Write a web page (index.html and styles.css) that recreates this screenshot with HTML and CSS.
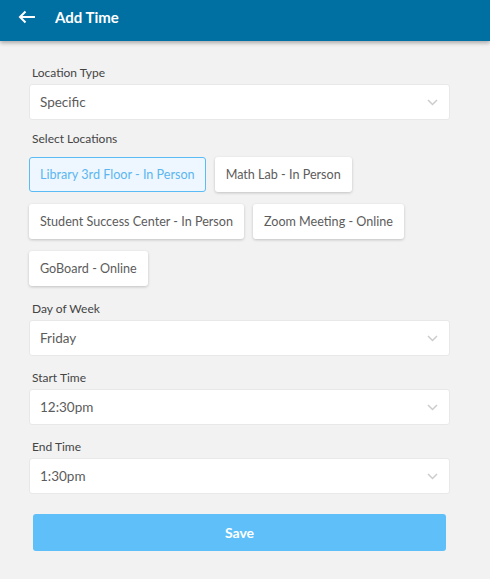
FILE: index.html
```html
<!DOCTYPE html>
<html>
<head>
<meta charset="utf-8">
<link rel="stylesheet" href="styles.css">
</head>
<body>
<header class="topbar">
  <svg class="back" width="18" height="14" viewBox="0 0 18 14"><path d="M17 7H2M7.5 1.5L2 7l5.5 5.5" fill="none" stroke="#fff" stroke-width="2"/></svg>
  <h1 class="title">Add Time</h1>
</header>
<main class="form">
  <div class="field first">
    <label class="label">Location Type</label>
    <div class="select"><span>Specific</span><svg class="chev" width="11" height="7" viewBox="0 0 11 7"><path d="M1 1l4.5 4.5L10 1" fill="none" stroke="#ccc" stroke-width="1.5"/></svg></div>
  </div>
  <div class="field locations">
    <label class="label">Select Locations</label>
    <div class="chips">
      <span class="chip active">Library 3rd Floor - In Person</span>
      <span class="chip">Math Lab - In Person</span>
      <span class="chip">Student Success Center - In Person</span>
      <span class="chip">Zoom Meeting - Online</span>
      <span class="chip">GoBoard - Online</span>
    </div>
  </div>
  <div class="field">
    <label class="label">Day of Week</label>
    <div class="select"><span>Friday</span><svg class="chev" width="11" height="7" viewBox="0 0 11 7"><path d="M1 1l4.5 4.5L10 1" fill="none" stroke="#ccc" stroke-width="1.5"/></svg></div>
  </div>
  <div class="field">
    <label class="label">Start Time</label>
    <div class="select"><span>12:30pm</span><svg class="chev" width="11" height="7" viewBox="0 0 11 7"><path d="M1 1l4.5 4.5L10 1" fill="none" stroke="#ccc" stroke-width="1.5"/></svg></div>
  </div>
  <div class="field">
    <label class="label">End Time</label>
    <div class="select"><span>1:30pm</span><svg class="chev" width="11" height="7" viewBox="0 0 11 7"><path d="M1 1l4.5 4.5L10 1" fill="none" stroke="#ccc" stroke-width="1.5"/></svg></div>
  </div>
  <button class="save">Save</button>
</main>
</body>
</html>
```
FILE: styles.css
```css
* { box-sizing: border-box; }
html, body { margin: 0; padding: 0; }
body {
  background: #f2f2f2;
  font-family: Lato, "Noto Sans", sans-serif;
  width: 490px;
  height: 579px;
  overflow: hidden;
}
.topbar {
  height: 41px;
  background: #0070a3;
  display: flex;
  align-items: center;
  box-shadow: 0 2px 4px rgba(0,0,0,0.3);
  padding-left: 18px;
  padding-bottom: 8px;
}
.back { display: block; }
.title {
  margin: 0 0 0 19px;
  color: #fff;
  font-size: 15px;
  font-weight: 700;
}
.form {
  padding: 24px 40px 0 29px;
  display: flex;
  flex-direction: column;
}
.field { display: flex; flex-direction: column; margin-bottom: 14px; }
.field.first { margin-bottom: 11px; }
.field.locations { margin-bottom: 15px; }
.label {
  font-size: 12px;
  line-height: 16px;
  color: #444;
  margin-left: 3px;
  margin-bottom: 3px;
}
.select {
  height: 36px;
  background: #fff;
  border: 1px solid #e8e8e8;
  border-radius: 3px;
  display: flex;
  align-items: center;
  justify-content: space-between;
  padding: 0 11px 0 10px;
  font-size: 13.5px;
  color: #5c5c5c;
}
.chips {
  display: flex;
  flex-wrap: wrap;
  gap: 12px 9px;
  margin-top: 7px;
}
.chip {
  height: 35px;
  display: flex;
  align-items: center;
  padding: 0 10px;
  background: #fff;
  border: 1px solid transparent;
  border-radius: 3px;
  box-shadow: 0 1px 3px rgba(0,0,0,0.2);
  font-size: 12.6px;
  color: #5c5c5c;
}
.chip.active {
  background: #eef7ff;
  border-color: #5bbcf5;
  color: #5bb6f0;
  box-shadow: none;
}
.save {
  margin: 6px 4px 0 4px;
  height: 37px;
  border: none;
  border-radius: 3px;
  background: #5ebff9;
  color: #fff;
  font-family: Lato, "Noto Sans", sans-serif;
  font-size: 14px;
  font-weight: 700;
}
```
